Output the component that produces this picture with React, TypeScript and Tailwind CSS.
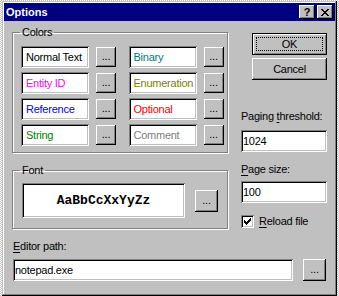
import React from 'react'

const raised = 'bg-[#c0c0c0] shadow-[inset_-1px_-1px_#000,inset_1px_1px_#fff,inset_-2px_-2px_#808080]'
const sunken = 'bg-white shadow-[inset_1px_1px_#808080,inset_-1px_-1px_#fff,inset_2px_2px_#000,inset_-2px_-2px_#c0c0c0]'
const group = 'border border-[#808080] shadow-[1px_1px_#fff,inset_1px_1px_#fff] m-0 pl-[8px]'

type ColorItem = {
    label: string;
    cls: string;
}

const colors: ColorItem[] = [
    { label: 'Normal Text', cls: 'text-black' },
    { label: 'Binary', cls: 'text-[#008080]' },
    { label: 'Entity ID', cls: 'text-[#ff00ff]' },
    { label: 'Enumeration', cls: 'text-[#808000]' },
    { label: 'Reference', cls: 'text-[#0000ff]' },
    { label: 'Optional', cls: 'text-[#ff0000]' },
    { label: 'String', cls: 'text-[#008000]' },
    { label: 'Comment', cls: 'text-[#808080]' },
]

function DotsButton({ w, h }: { w: string; h: string }) {
    return (
        <button type='button' className={`${raised} ${w} ${h} shrink-0 flex items-center justify-center leading-none pb-[1px]`}>...</button>
    )
}

function Legend({ children }: { children: React.ReactNode }) {
    return <legend className='ml-[-1px] px-[2px] leading-[13px]'>{children}</legend>
}

function CloseGlyph() {
    return (
        <svg width='8' height='7' viewBox='0 0 8 7' shapeRendering='crispEdges'>
            <path fill='#000' d='M0 0h2v1H0zM6 0h2v1H6zM1 1h2v1H1zM5 1h2v1H5zM2 2h4v1H2zM3 3h2v1H3zM2 4h4v1H2zM1 5h2v1H1zM5 5h2v1H5zM0 6h2v1H0zM6 6h2v1H6z' />
        </svg>
    )
}

function CheckGlyph() {
    return (
        <svg width='7' height='7' viewBox='0 0 7 7' shapeRendering='crispEdges'>
            <path fill='#000' d='M6 0h1v1H6zM5 1h2v1H5zM0 2h1v1H0zM4 2h3v1H4zM0 3h2v1H0zM3 3h3v1H3zM0 4h5v1H0zM1 5h3v1H1zM2 6h1v1H2z' />
        </svg>
    )
}

export default function App() {
    return (
        <div className="w-[339px] h-[296px] bg-[repeating-conic-gradient(#c0c0c0_0_25%,#fff_0_50%)] bg-[length:2px_2px] pt-px pl-[2px] font-['Liberation_Sans',Arial,sans-serif] text-[11px] leading-[13px] tracking-[-0.25px] text-black">
            <div className='w-[335px] h-[295px] bg-[#c0c0c0] p-[2px] flex flex-col shadow-[inset_-1px_-1px_#000,inset_1px_1px_#c0c0c0,inset_-2px_-2px_#808080,inset_2px_2px_#fff]'>
                {/* title bar */}
                <div className='h-[18px] bg-[#000080] flex items-center justify-between pl-[2px] pr-[2px]'>
                    <span className='text-white font-bold tracking-normal'>Options</span>
                    <div className='flex gap-[2px]'>
                        <div className={`${raised} w-4 h-[14px] flex items-center justify-center font-bold text-[11px] leading-none tracking-normal`}>?</div>
                        <div className={`${raised} w-4 h-[14px] flex items-center justify-center`}><CloseGlyph /></div>
                    </div>
                </div>

                <div className='flex flex-col'>
                    <div className='flex items-start pl-[8px]'>
                        {/* left column */}
                        <div className='w-[216px] mt-[5px] flex flex-col'>
                            <fieldset className={`${group} pt-[7px] pb-[6px]`}>
                                <Legend>Colors</Legend>
                                <div className='grid grid-cols-2 gap-x-[9px] gap-y-[4px]'>
                                    {colors.map((c) => (
                                        <div key={c.label} className='flex items-center gap-[7px]'>
                                            <div className={`${sunken} ${c.cls} w-[68px] h-[22px] flex items-center pl-[5px] whitespace-nowrap overflow-hidden`}>{c.label}</div>
                                            <DotsButton w='w-5' h='h-5' />
                                        </div>
                                    ))}
                                </div>
                            </fieldset>
                            <fieldset className={`${group} mt-[11px] pt-[6px] pb-[10px]`}>
                                <Legend>Font</Legend>
                                <div className='flex items-center gap-[10px] pl-[1px]'>
                                    <div className={`${sunken} w-[163px] h-[35px] flex items-center justify-center font-['Liberation_Mono','Courier_New',monospace] font-bold text-[13px] tracking-normal`}>AaBbCcXxYyZz</div>
                                    <DotsButton w='w-[23px]' h='h-[22px]' />
                                </div>
                            </fieldset>
                        </div>

                        {/* right column */}
                        <div className='w-[86px] ml-[13px] mt-[12px] flex flex-col'>
                            <button type='button' className='self-end w-[75px] h-[22px] border border-black bg-[#c0c0c0] shadow-[inset_1px_1px_#fff,inset_-1px_-1px_#808080] p-[3px] flex'>
                                <span className='flex-1 border border-dotted border-black flex items-center justify-center'>OK</span>
                            </button>
                            <button type='button' className={`${raised} self-end mt-[3px] w-[75px] h-[22px] flex items-center justify-center`}>Cancel</button>

                            <label className='mt-[30px]'>Paging <span className='underline underline-offset-[2px]'>t</span>hreshold:</label>
                            <div className={`${sunken} mt-[7px] h-[22px] flex items-center pl-[2px]`}>1024</div>

                            <label className='mt-[11px]'><span className='underline underline-offset-[2px]'>P</span>age size:</label>
                            <div className={`${sunken} mt-[5px] h-[22px] flex items-center pl-[2px]`}>100</div>

                            <div className='mt-[12px] flex items-center gap-[5px]'>
                                <div className={`${sunken} w-[13px] h-[13px] flex items-center justify-center`}><CheckGlyph /></div>
                                <span><span className='underline underline-offset-[2px]'>R</span>eload file</span>
                            </div>
                        </div>
                    </div>

                    {/* editor path */}
                    <div className='mt-[11px] pl-[9px] flex flex-col'>
                        <label><span className='underline underline-offset-[2px]'>E</span>ditor path:</label>
                        <div className='mt-[6px] flex items-center gap-[10px]'>
                            <div className={`${sunken} w-[280px] h-[22px] flex items-center pl-[2px]`}>notepad.exe</div>
                            <DotsButton w='w-[23px]' h='h-[22px]' />
                        </div>
                    </div>
                </div>
            </div>
        </div>
    )
}
